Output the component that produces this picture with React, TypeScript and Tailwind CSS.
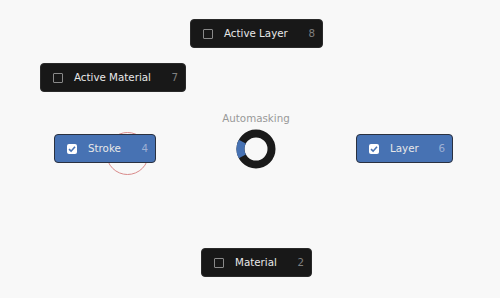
import React from 'react';

interface PieItemProps {
  label: string;
  hotkey: string;
  checked?: boolean;
  className: string;
}

const PieItem: React.FC<PieItemProps> = ({ label, hotkey, checked = false, className }) => {
  return (
    <div
      className={`absolute flex h-[29px] items-center rounded-[4px] border pl-3 pr-[7px] ${
        checked ? 'border-[#2a3140] bg-[#4772b3]' : 'border-[#2a2a2a] bg-[#181818]'
      } ${className}`}
    >
      {checked ? (
        <span className="flex h-[10px] w-[10px] items-center justify-center rounded-[2px] bg-white">
          <svg width="8" height="8" viewBox="0 0 8 8">
            <path d="M1 4.2 L3.1 6.2 L7 1.8" fill="none" stroke="#4772b3" strokeWidth="1.6" />
          </svg>
        </span>
      ) : (
        <span className="h-[10px] w-[10px] rounded-[1px] border border-[#8a8a8a]" />
      )}
      <span className="ml-[11px] flex-1 text-[#e8e8e8]">{label}</span>
      <span className={checked ? 'text-[#9db0d4]' : 'text-[#808080]'}>{hotkey}</span>
    </div>
  );
};

const App: React.FC = () => {
  return (
    <div className="relative h-[298px] w-[500px] overflow-hidden bg-[#f8f8f8] font-['DejaVu_Sans',sans-serif] text-[10.3px]">
      {/* pointer ring behind the Stroke item */}
      <div className="absolute left-[106px] top-[132px] h-[43px] w-[43px] rounded-full border border-[#d98a8a]" />

      <PieItem label="Active Layer" hotkey="8" className="left-[190px] top-[19px] w-[133px]" />
      <PieItem label="Active Material" hotkey="7" className="left-[40px] top-[63px] w-[146px]" />
      <PieItem label="Stroke" hotkey="4" checked className="left-[54px] top-[134px] w-[102px]" />
      <PieItem label="Layer" hotkey="6" checked className="left-[356px] top-[134px] w-[97px]" />
      <PieItem label="Material" hotkey="2" className="left-[201px] top-[248px] w-[111px]" />

      {/* centre: title and direction ring */}
      <div className="absolute left-[206px] top-[111px] flex w-[100px] flex-col items-center">
        <span className="leading-[14px] text-[#999999]">Automasking</span>
        <svg className="mt-[4px]" width="40" height="40" viewBox="0 0 40 40">
          <circle cx="20" cy="20" r="15.5" fill="none" stroke="#1a1a1a" strokeWidth="8" />
          <path
            d="M 6.3 12.7 A 15.5 15.5 0 0 0 6.3 27.3"
            fill="none"
            stroke="#4772b3"
            strokeWidth="8"
          />
        </svg>
      </div>
    </div>
  );
};

export default App;
